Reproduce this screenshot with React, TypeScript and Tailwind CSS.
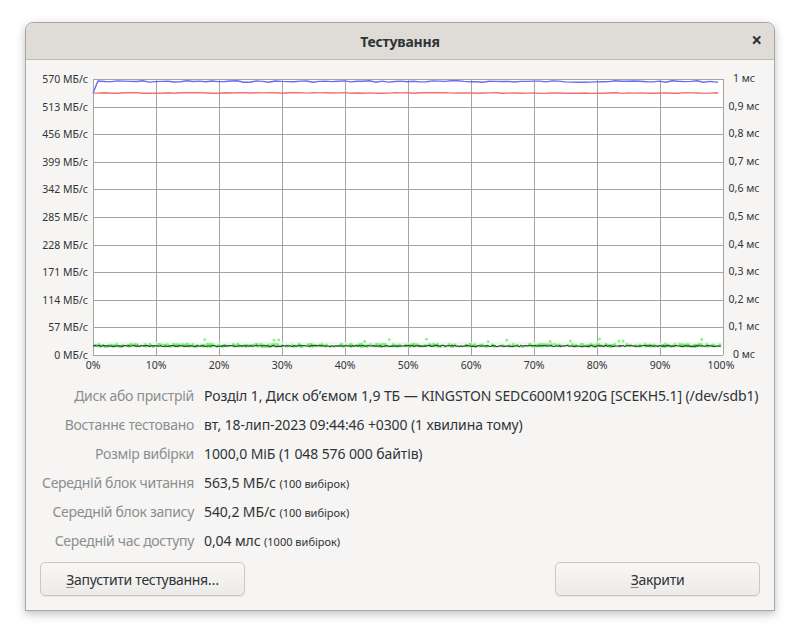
import React from 'react';

const FONT = { fontFamily: '"Noto Sans", "Open Sans", sans-serif' };

// deterministic noise so the plot is the same on every render
function rng(seed: number) {
  let s = seed;
  return () => {
    s = (s * 9301 + 49297) % 233280;
    return s / 233280;
  };
}

const PL = 67; // plot left (svg coords)
const PR = 697;
const PT = 19;
const PB = 295;
const W = PR - PL;
const H = PB - PT;

const leftLabels = ['570 МБ/с', '513 МБ/с', '456 МБ/с', '399 МБ/с', '342 МБ/с', '285 МБ/с', '228 МБ/с', '171 МБ/с', '114 МБ/с', '57 МБ/с', '0 МБ/с'];
const rightLabels = ['1 мс', '0,9 мс', '0,8 мс', '0,7 мс', '0,6 мс', '0,5 мс', '0,4 мс', '0,3 мс', '0,2 мс', '0,1 мс', '0 мс'];

function Chart() {
  const r = rng(7);
  const end = 692;

  const blue: string[] = [`${PL},${PT + 14}`, `${PL + 5},${PT + 2}`];
  for (let x = PL + 12; x <= end; x += 6.3) {
    blue.push(`${x.toFixed(1)},${(PT + 2.5 + (r() - 0.5) * 1.6).toFixed(1)}`);
  }
  blue.push(`${end},${PT + 3}`);
  const red: string[] = [];
  for (let x = PL; x <= end; x += 6.3) {
    red.push(`${x.toFixed(1)},${(PT + 14 + (r() - 0.5) * 0.8).toFixed(1)}`);
  }
  red.push(`${end},${PT + 14}`);
  const dark: string[] = [];
  const dots: { x: number; y: number }[] = [];
  for (let x = PL; x <= end + 3; x += 1.3) {
    dark.push(`${x.toFixed(1)},${(PB - 9 + (r() - 0.5) * 1.2).toFixed(1)}`);
  }
  for (let i = 0; i < 420; i++) {
    const x = PL + r() * (end + 3 - PL);
    let y = PB - 9.5 + (r() - 0.5) * 2.5;
    if (r() < 0.025) y = PB - 13 - r() * 3;
    dots.push({ x, y });
  }

  return (
    <svg width={750} height={320} className="block" style={FONT}>
      <rect x={PL} y={PT} width={W} height={H} fill="#ffffff" />
      {Array.from({ length: 11 }).map((_, i) => (
        <line key={'v' + i} x1={PL + (W * i) / 10 + 0.5} x2={PL + (W * i) / 10 + 0.5} y1={PT} y2={PB} stroke="#a4a4a4" strokeWidth={1} />
      ))}
      {Array.from({ length: 11 }).map((_, i) => (
        <line key={'h' + i} x1={PL} x2={PR} y1={Math.round(PT + (H * i) / 10) + 0.5} y2={Math.round(PT + (H * i) / 10) + 0.5} stroke="#a4a4a4" strokeWidth={1} />
      ))}
      <rect x={PL + 1} y={PB - 13} width={end + 3 - PL} height={6} fill="#e6f6e6" opacity={0.7} />
      {dots.map((d, i) => (
        <circle key={i} cx={d.x} cy={d.y} r={1.4} fill="#6ef06e" opacity={0.85} />
      ))}
      <polyline points={dark.join(' ')} fill="none" stroke="#2f4a2f" strokeWidth={1.2} />
      <polyline points={red.join(' ')} fill="none" stroke="#f07272" strokeWidth={1.4} />
      <polyline points={blue.join(' ')} fill="none" stroke="#6a6af5" strokeWidth={1.4} />
      {leftLabels.map((t, i) => (
        <text key={t} x={PL - 5} y={PT + (H * i) / 10 + 4} textAnchor="end" fontSize={10.5} fill="#2e3436">
          {t}
        </text>
      ))}
      {rightLabels.map((t, i) => (
        <text key={t} x={718} y={PT + (H * i) / 10 + 3} textAnchor="middle" fontSize={10.5} fill="#2e3436">
          {t}
        </text>
      ))}
      {Array.from({ length: 11 }).map((_, i) => (
        <text key={'x' + i} x={PL + (W * i) / 10 - (i === 10 ? 2 : 0)} y={PB + 14} textAnchor="middle" fontSize={10.5} fill="#2e3436">
          {i * 10}%
        </text>
      ))}
    </svg>
  );
}

const rows: [string, React.ReactNode][] = [
  ['Диск або пристрій', 'Розділ 1, Диск об’ємом 1,9 ТБ — KINGSTON SEDC600M1920G [SCEKH5.1] (/dev/sdb1)'],
  ['Востаннє тестовано', 'вт, 18-лип-2023 09:44:46 +0300 (1 хвилина тому)'],
  ['Розмір вибірки', '1000,0 МіБ (1 048 576 000 байтів)'],
  ['Середній блок читання', <>563,5 МБ/с <span className="text-[11px] tracking-normal">(100 вибірок)</span></>],
  ['Середній блок запису', <>540,2 МБ/с <span className="text-[11px] tracking-normal">(100 вибірок)</span></>],
  ['Середній час доступу', <>0,04 млс <span className="text-[11px] tracking-normal">(1000 вибірок)</span></>],
];

function Button({ first, rest }: { first: string; rest: string }) {
  return (
    <button className="flex h-[34px] w-[205px] items-center justify-center rounded-[5px] border border-[#cdc7c2] bg-gradient-to-b from-[#f8f7f6] to-[#edebe9] text-[14px] tracking-[-0.3px] text-[#2e3436] shadow-[0_1px_0_rgba(0,0,0,0.06)]">
      <span className="underline decoration-[#8a8a8a] underline-offset-2">{first}</span>
      {rest}
    </button>
  );
}

export default function App() {
  return (
    <div className="h-[639px] w-[800px] bg-white pl-[25px] pt-[22px]" style={FONT}>
      <div className="flex h-[589px] w-[750px] flex-col overflow-hidden rounded-t-[8px] border border-[#a9a6a2] bg-[#f6f5f4] shadow-[0_3px_10px_rgba(0,0,0,0.25)]">
        <div className="relative flex h-[37px] shrink-0 items-center justify-center border-b border-[#bfb8b1] bg-[#dfdcd8]">
          <span className="text-[14px] font-bold tracking-[-0.2px] text-[#2e3436]">Тестування</span>
          <span className="absolute right-[12px] top-[5px] text-[19px] font-bold leading-[24px] text-[#2e3436]">×</span>
        </div>
        <Chart />
        <div className="mt-[1px] grid grid-cols-[168px_1fr] gap-x-[10px] text-[14px] tracking-[-0.1px]">
          {rows.map(([k, v]) => (
            <React.Fragment key={k}>
              <div className="flex h-[29px] items-center justify-end whitespace-nowrap tracking-[-0.3px] text-[#8b8e8f]">{k}</div>
              <div className="flex h-[29px] items-center whitespace-nowrap text-[#2e3436]">
                <span>{v}</span>
              </div>
            </React.Fragment>
          ))}
        </div>
        <div className="mt-auto mb-[14px] flex justify-between px-[14px]">
          <Button first="З" rest="апустити тестування…" />
          <Button first="З" rest="акрити" />
        </div>
      </div>
    </div>
  );
}
